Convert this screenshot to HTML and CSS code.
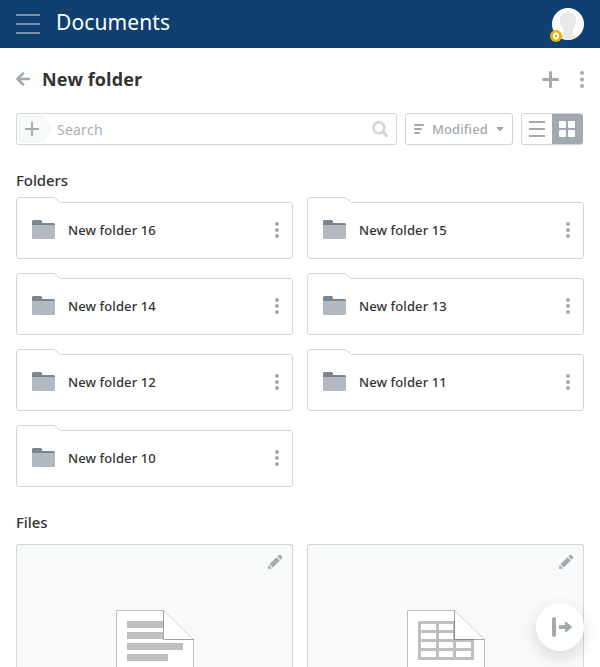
FILE: index.html
```
<!DOCTYPE html>
<html lang="en">
<head>
<meta charset="utf-8">
<title>Documents</title>
<link rel="stylesheet" href="styles.css">
</head>
<body>
<svg class="defs" width="0" height="0">
  <symbol id="card" viewBox="0 0 277 62"><path d="M.5 3.5Q.5.5 3.500.5H38L44.500 5.500H274Q276.500 5.500 276.500 8V59Q276.500 61.500 274 61.500H3Q.5 61.500.5 59Z" fill="#fff" stroke="#d0d5da"/></symbol>
  <symbol id="folder" viewBox="0 0 23 19"><path d="M0 6V1.500Q0 0 1.500 0H8.500Q10 0 10 1.500V3H21.500Q23 3 23 4.500V7H0Z" fill="#79868f"/><path d="M0 5H23V17.500Q23 19 21.500 19H1.500Q0 19 0 17.500Z" fill="#b2b9c0"/></symbol>
  <symbol id="dots" viewBox="0 0 4 16"><g fill="#a3a9ae"><circle cx="2" cy="2" r="2"/><circle cx="2" cy="8" r="2"/><circle cx="2" cy="14" r="2"/></g></symbol>
  <symbol id="pencil" viewBox="0 0 16 16"><g fill="#a3a9ae"><path d="M9.400 3.200 12.800 6.600 5.800 13.600 2.400 10.200Z"/><path d="M10.300 2.300 11.800.9Q12.600.3 13.500 1.100L14.900 2.500Q15.700 3.400 15 4.200L13.700 5.700Z"/><path d="M1.500 11 5 14.500 1 15Z"/></g></symbol>
</svg>
<header class="topbar">
  <svg width="24" height="20" viewBox="0 0 24 20"><path d="M0 1H24M0 10H24M0 19H24" stroke="#7792af" stroke-width="2"/></svg>
  <h1 class="product">Documents</h1>
  <div class="avatar">
    <svg width="32" height="32" viewBox="0 0 32 32"><circle cx="16" cy="16" r="16" fill="#fff"/><path d="M16 4C21 4 24 7 24 11.500C24.500 15.500 23 19 21 21.500V25C21.500 27 23 28 25.500 29Q21 32 16 32Q11 32 7 29C9.500 28 11 27 11.500 25V21.500C9 19 7.500 15.500 8 11.500C8 7 11 4 16 4Z" fill="#e8e8e8"/></svg>
    <svg class="badge" width="12" height="12" viewBox="0 0 12 12"><circle cx="6" cy="6" r="6" fill="#e0b40c"/><ellipse cx="6" cy="6" rx="2.100" ry="2.600" fill="none" stroke="#fff" stroke-width="1.700"/></svg>
  </div>
</header>
<main>
  <div class="title-row">
    <svg width="14" height="14" viewBox="0 0 14 14"><path d="M13 7H2M7 1.500 1.500 7 7 12.500" fill="none" stroke="#a3a9ae" stroke-width="2.500" stroke-linecap="round"/></svg>
    <h2 class="title">New folder</h2>
    <svg class="add" width="17" height="17" viewBox="0 0 17 17"><path d="M1.500 8.500H15.500M8.500 1.500V15.500" stroke="#a3a9ae" stroke-width="3" stroke-linecap="round"/></svg>
    <svg width="4" height="17" viewBox="0 0 4 17"><g fill="#a3a9ae"><circle cx="2" cy="2" r="2"/><circle cx="2" cy="8.500" r="2"/><circle cx="2" cy="15" r="2"/></g></svg>
  </div>
  <div class="tools">
    <div class="search">
      <svg width="34" height="28" viewBox="0 0 34 28"><path d="M4 1.500H23Q25 1.500 26.200 3L33 14 26.200 25Q25 26.500 23 26.500H4Q1.500 26.500 1.500 24V4Q1.500 1.500 4 1.500Z" fill="#f8f9f9" stroke="#eceff1"/><path d="M7 14H21M14 7V21" stroke="#a3a9ae" stroke-width="2"/></svg>
      <span class="placeholder">Search</span>
      <svg width="16" height="16" viewBox="0 0 16 16"><circle cx="6.800" cy="6.800" r="5.600" fill="none" stroke="#d0d5da" stroke-width="2.400"/><path d="M11 11 14.500 14.500" stroke="#d0d5da" stroke-width="3" stroke-linecap="round"/></svg>
    </div>
    <div class="sort">
      <svg width="10" height="10" viewBox="0 0 10 10"><path d="M1 1H9M1 5H7M1 9H5" stroke="#a3a9ae" stroke-width="2" stroke-linecap="round"/></svg>
      <span class="sort-label">Modified</span>
      <svg width="8" height="5" viewBox="0 0 8 5"><path d="M1 .5H7L4 4Z" fill="#a3a9ae" stroke="#a3a9ae" stroke-linejoin="round"/></svg>
    </div>
    <div class="view">
      <div class="view-btn"><svg width="16" height="16" viewBox="0 0 16 16"><path d="M0 1H16M0 8H16M0 15H16" stroke="#a3a9ae" stroke-width="2"/></svg></div>
      <div class="view-btn on"><svg width="16" height="16" viewBox="0 0 16 16"><g fill="#fff"><rect width="7" height="7" rx="1"/><rect x="9" width="7" height="7" rx="1"/><rect y="9" width="7" height="7" rx="1"/><rect x="9" y="9" width="7" height="7" rx="1"/></g></svg></div>
    </div>
  </div>
  <h3 class="section">Folders</h3>
  <div class="grid">
    <div class="folder"><svg class="outline"><use href="#card"/></svg><svg class="icon"><use href="#folder"/></svg><span class="name">New folder 16</span><svg class="menu"><use href="#dots"/></svg></div>
    <div class="folder"><svg class="outline"><use href="#card"/></svg><svg class="icon"><use href="#folder"/></svg><span class="name">New folder 15</span><svg class="menu"><use href="#dots"/></svg></div>
    <div class="folder"><svg class="outline"><use href="#card"/></svg><svg class="icon"><use href="#folder"/></svg><span class="name">New folder 14</span><svg class="menu"><use href="#dots"/></svg></div>
    <div class="folder"><svg class="outline"><use href="#card"/></svg><svg class="icon"><use href="#folder"/></svg><span class="name">New folder 13</span><svg class="menu"><use href="#dots"/></svg></div>
    <div class="folder"><svg class="outline"><use href="#card"/></svg><svg class="icon"><use href="#folder"/></svg><span class="name">New folder 12</span><svg class="menu"><use href="#dots"/></svg></div>
    <div class="folder"><svg class="outline"><use href="#card"/></svg><svg class="icon"><use href="#folder"/></svg><span class="name">New folder 11</span><svg class="menu"><use href="#dots"/></svg></div>
    <div class="folder"><svg class="outline"><use href="#card"/></svg><svg class="icon"><use href="#folder"/></svg><span class="name">New folder 10</span><svg class="menu"><use href="#dots"/></svg></div>
  </div>
  <h3 class="section files-heading">Files</h3>
  <div class="grid">
    <div class="file">
      <svg class="edit"><use href="#pencil"/></svg>
      <svg class="sheet" width="78" height="57" viewBox="0 0 78 57"><path d="M.5.5H47.500L77.500 29.500V57H.5Z" fill="#fff"/><path d="M47.500.5H.5V57M77.500 57V29.500" fill="none" stroke="#bfbfbf"/><path d="M11 11H48V18H11ZM11 22H48V29H11ZM11 33H67V40H11ZM11 44H52V51H11Z" fill="#bfbfbf"/><path d="M47.500.5 77.500 29.500" stroke="#d5d5d5"/><path d="M47.500 0V29.500H78" fill="none" stroke="#a3a3a3"/></svg>
    </div>
    <div class="file">
      <svg class="edit"><use href="#pencil"/></svg>
      <svg class="sheet" width="78" height="57" viewBox="0 0 78 57"><path d="M.5.5H47.500L77.500 29.500V57H.5Z" fill="#fff"/><path d="M47.500.5H.5V57M77.500 57V29.500" fill="none" stroke="#bfbfbf"/><path d="M11 11H48V29H67V50H11Z" fill="#bfbfbf"/><path d="M14 14H29V20H14ZM32 14H46V20H32ZM14 23H29V29H14ZM32 23H46V29H32ZM14 32H29V38H14ZM32 32H46V38H32ZM49 32H64V38H49ZM14 41H29V47H14ZM32 41H46V47H32ZM49 41H64V47H49Z" fill="#fff"/><path d="M47.500.5 77.500 29.500" stroke="#d5d5d5"/><path d="M47.500 0V29.500H78" fill="none" stroke="#aaa"/><path d="M47.500 11V29.500H67" fill="none" stroke="#858585"/></svg>
    </div>
  </div>
</main>
<div class="fab"><svg width="20" height="20" viewBox="0 0 20 20"><path d="M2 2V18" stroke="#a3a9ae" stroke-width="4" stroke-linecap="round"/><path d="M7 8.500Q7 8 8 8H13V5.500Q13.200 4.300 14.500 5L19.500 9.300Q20 10 19.500 10.700L14.500 15Q13.200 15.700 13 14.500V12H8Q7 12 7 11.500Z" fill="#a3a9ae"/></svg></div>
</body>
</html>
```
FILE: styles.css
```
* { box-sizing: border-box; }
body {
  margin: 0;
  background: #fff;
  color: #333;
  font-family: "Noto Sans", "Open Sans", sans-serif;
}
svg { display: block; flex: none; }
.defs { position: absolute; }
h1, h2, h3 { margin: 0; }
.topbar {
  display: flex;
  align-items: center;
  height: 48px;
  padding: 0 16px;
  background: #0f4071;
}
.product {
  margin: -4px 0 0 16px;
  color: #fff;
  font-size: 21px;
  font-weight: 450;
  line-height: 30px;
  letter-spacing: .1px;
}
.avatar { position: relative; margin-left: auto; }
.badge { position: absolute; left: -2px; bottom: -2px; }
main { padding: 0 16px; }
.title-row { display: flex; align-items: center; height: 62px; }
.title { margin: -1px 0 0 12px; font-family: "Open Sans", sans-serif; font-size: 18px; font-weight: 700; line-height: 28px; letter-spacing: .1px; }
.add { margin: 0 21px 0 auto; }
.tools { display: flex; gap: 8px; height: 32px; margin-top: 3px; }
.search, .sort, .view {
  display: flex;
  align-items: center;
  border: 1px solid #d0d5da;
  border-radius: 3px;
}
.search { width: 381px; padding: 0 8px 0 1px; }
.placeholder { flex: 1; margin-left: 5px; color: #a3a9ae; font-family: "Open Sans", sans-serif; font-size: 14px; letter-spacing: .25px; }
.sort { width: 108px; padding: 0 8px; }
.sort-label { flex: 1; margin-left: 8px; color: #a3a9ae; font-size: 13px; font-weight: 500; letter-spacing: .1px; }
.view { width: 62px; overflow: hidden; border-right-color: #a3a9b1; }
.view-btn { display: grid; place-items: center; width: 30px; height: 32px; }
.view-btn.on { width: 31px; background: #a3a9b1; }
.section { margin: 25px 0 7px; font-size: 15px; font-weight: 500; line-height: 20px; letter-spacing: -.1px; }
.files-heading { margin-top: 25px; margin-bottom: 12px; }
.grid { display: grid; grid-template-columns: 277px 277px; gap: 14px; }
.folder { position: relative; display: flex; align-items: center; height: 62px; padding: 4px 14px 0 16px; }
.outline { position: absolute; top: 0; left: 0; width: 277px; height: 62px; }
.icon { position: relative; width: 23px; height: 19px; margin-top: -1px; }
.name { position: relative; margin-left: 13px; font-size: 13px; font-weight: 500; letter-spacing: .1px; }
.menu { position: relative; width: 4px; height: 16px; margin-left: auto; }
.file {
  height: 123px;
  padding: 9px 9px 0 10px;
  border: 1px solid #d0d5da;
  border-bottom: 0;
  border-radius: 3px 3px 0 0;
  background: #f8f9f9;
}
.edit { width: 16px; height: 16px; margin-left: auto; }
.sheet { margin: 40px 0 0 89px; }
.fab {
  position: fixed;
  left: 536px;
  top: 603px;
  display: grid;
  place-items: center;
  width: 48px;
  height: 48px;
  padding-left: 4px;
  border-radius: 50%;
  background: #fff;
  box-shadow: 0 6px 16px rgba(4, 15, 27, .14);
}
```
